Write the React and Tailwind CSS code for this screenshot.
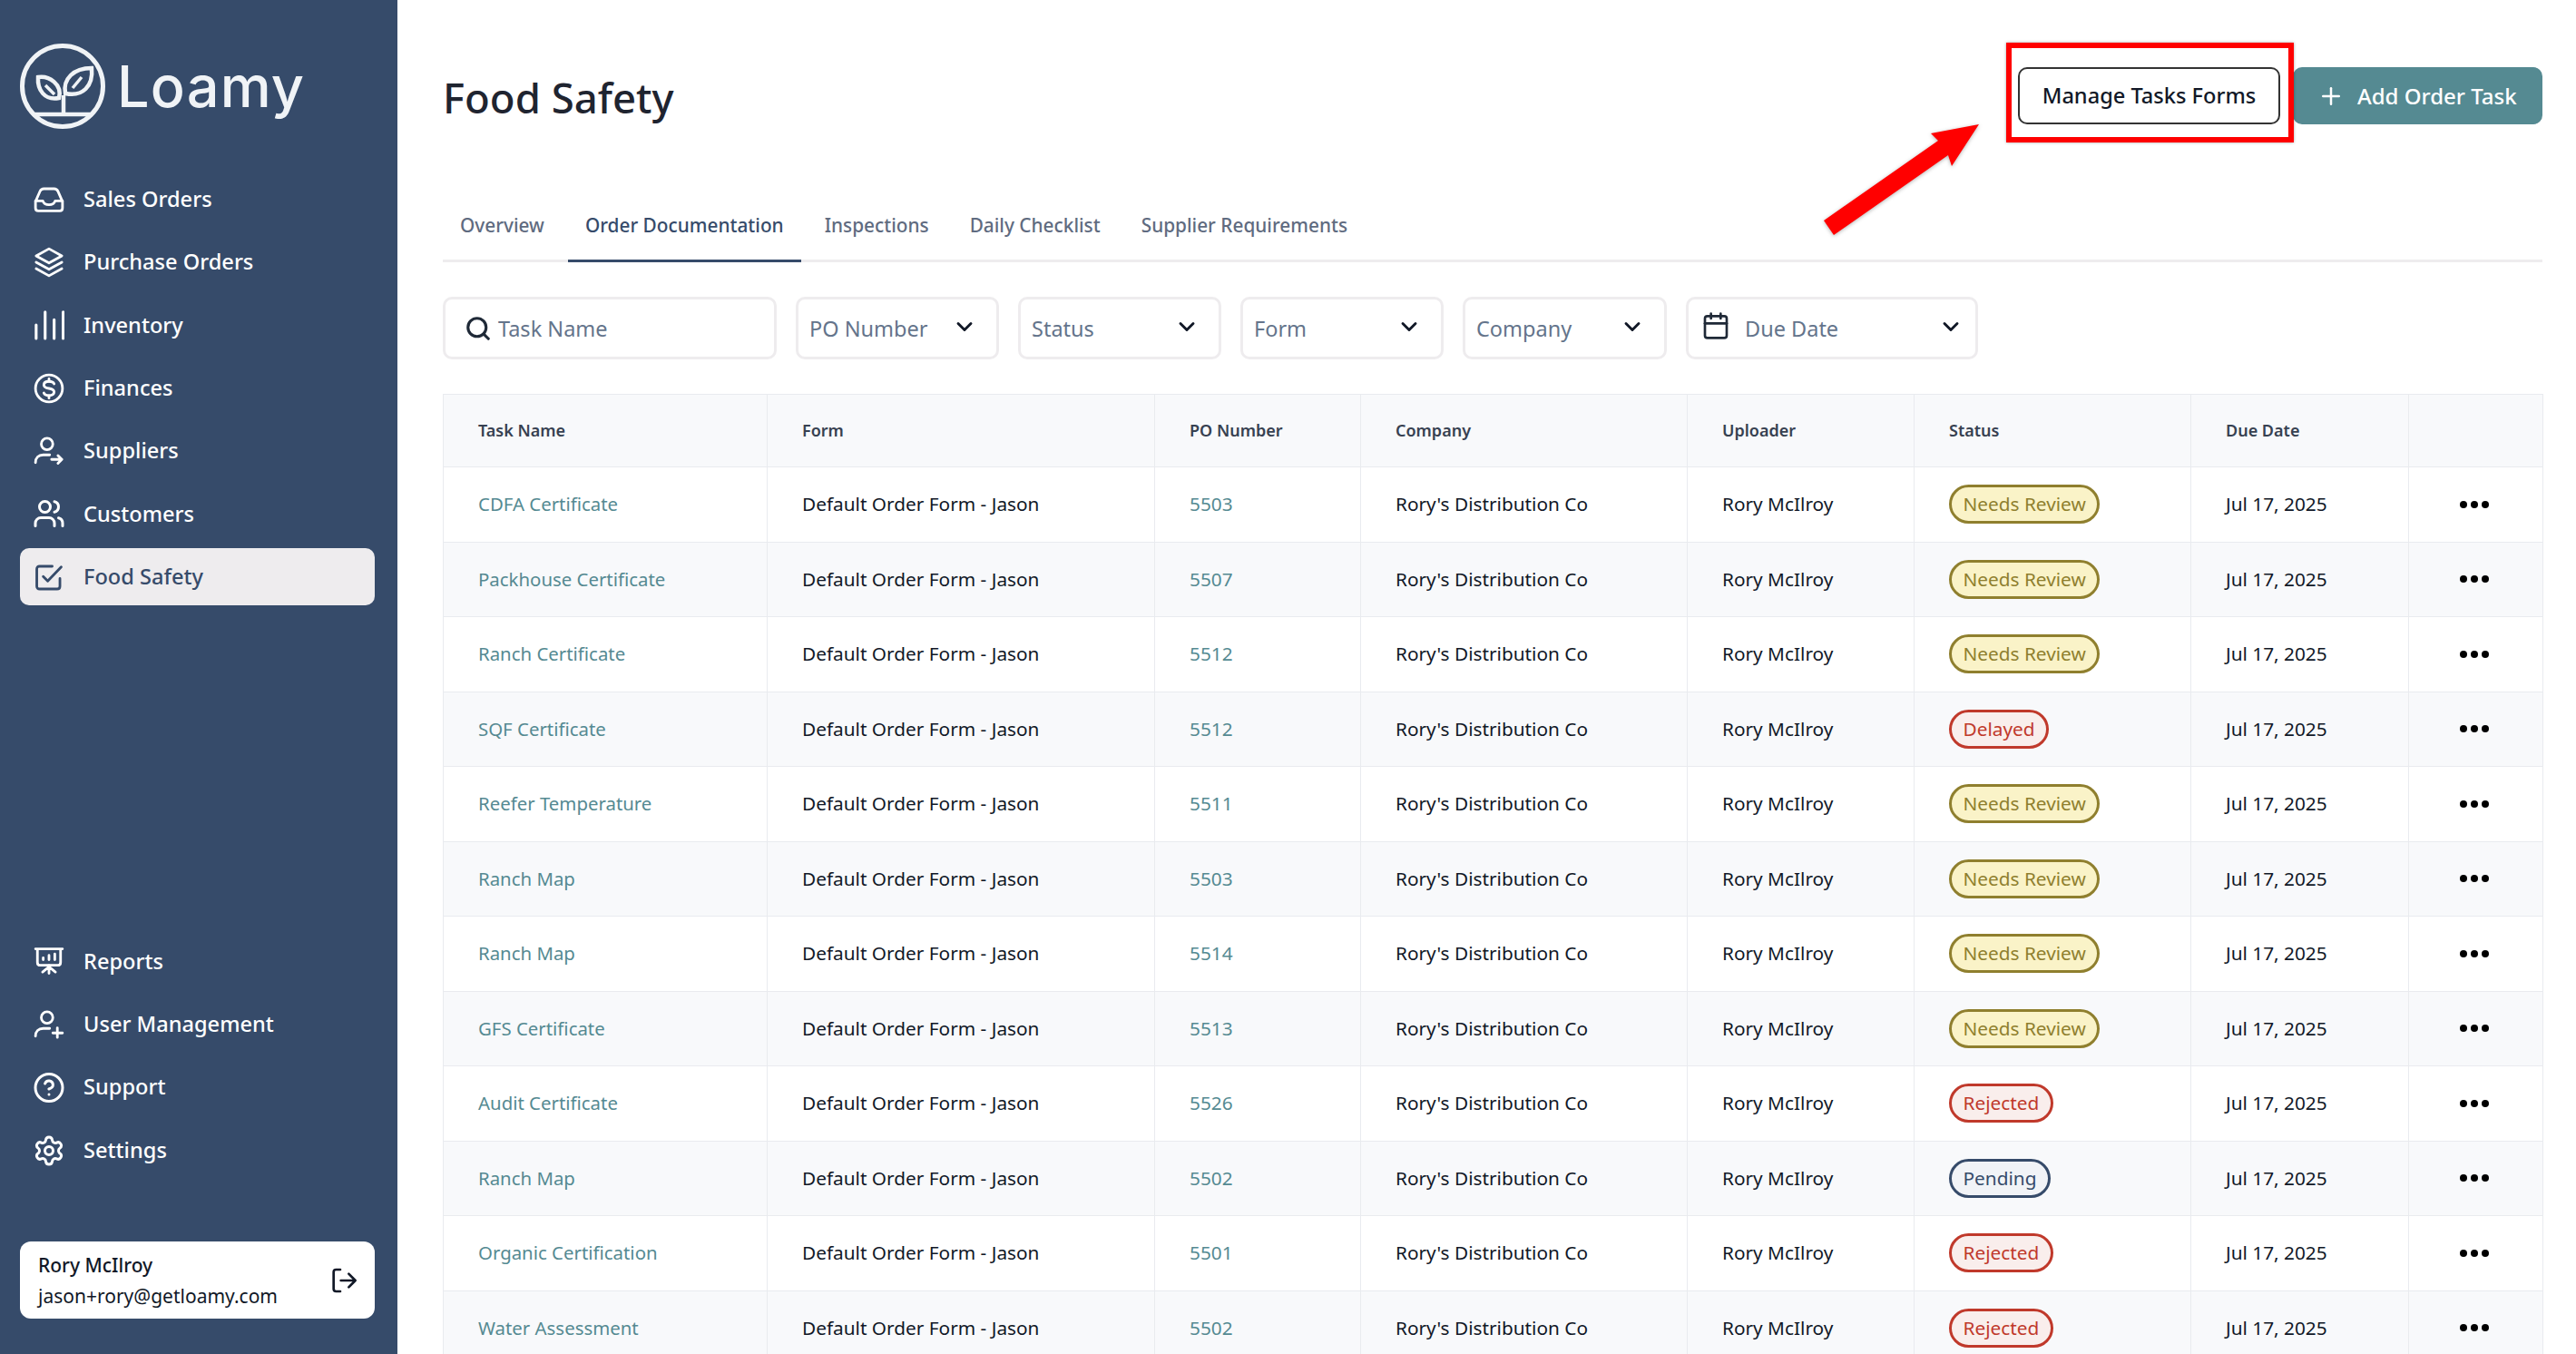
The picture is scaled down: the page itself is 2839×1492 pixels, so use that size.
import {
  ChevronDown,
  CircleHelp,
  Plus,
  Search,
  Settings,
  Users,
  Calendar,
} from "lucide-react";

const Stroke = ({ children, className = "w-[34px] h-[34px]", width = 2 }) => (
  <svg
    viewBox="0 0 24 24"
    fill="none"
    stroke="currentColor"
    strokeWidth={width}
    strokeLinecap="round"
    strokeLinejoin="round"
    className={className}
  >
    {children}
  </svg>
);

const Tray = () => (
  <Stroke>
    <path d="M1.500 13.500 5 5.500C5.600 4.200 6.400 3.500 8 3.500h8c1.600 0 2.400.7 3 2l3.500 8v5c0 1.400-.8 2.200-2.200 2.200H3.700c-1.400 0-2.200-.8-2.200-2.200z" />
    <path d="M1.500 13h5.700c.6 1.800 2.500 3 4.800 3s4.200-1.200 4.800-3h5.700" />
  </Stroke>
);

const Stack = () => (
  <Stroke>
    <path d="M12 1.500l10 5.500-10 5.500L2 7z" />
    <path d="M2 12l10 5.500L22 12" />
    <path d="M2 17l10 5.500L22 17" />
  </Stroke>
);

const Bars = () => (
  <Stroke width={2.200}>
    <path d="M2 12v10.500M9 2v20.500M16 8v14.500M23 2v20.500" />
  </Stroke>
);

const Dollar = () => (
  <Stroke>
    <circle cx="12" cy="12" r="10.500" />
    <path d="M16 8.500c-.6-1.500-2-2-4-2-2.500 0-4 1-4 2.800 0 3.900 8 1.500 8 5.400 0 1.800-1.500 2.800-4 2.800-2 0-3.400-.5-4-2" />
    <path d="M12 4.500v2M12 17.500v2" />
  </Stroke>
);

const UserArrow = () => (
  <Stroke>
    <circle cx="10.500" cy="6.500" r="4.500" />
    <path d="M1.500 21c0-3.800 2.400-6 6-6h5" />
    <path d="M14 18.500h8M19 15.500l3 3-3 3" />
  </Stroke>
);

const UserPlus = () => (
  <Stroke>
    <circle cx="10.500" cy="6.500" r="4.500" />
    <path d="M1.500 21c0-3.800 2.400-6 6-6h5" />
    <path d="M18.500 14.500v7.500M15 18.500h7.500" />
  </Stroke>
);

const CheckBox = () => (
  <Stroke>
    <path d="M20.500 13v6c0 1.400-.8 2.200-2.200 2.200H4.700c-1.400 0-2.200-.8-2.200-2.200V5.700c0-1.400.8-2.200 2.200-2.200h9.800" />
    <path d="M7.500 11.500l3.500 3.500L21.500 4" />
  </Stroke>
);

const Board = () => (
  <Stroke>
    <path d="M1.500 2.500h21M3 2.500v10.500c0 1.500.8 2.300 2.300 2.300h13.400c1.500 0 2.300-.8 2.300-2.300V2.500" />
    <path d="M12 15.500v6M12 16.500l-5 4M12 16.500l5 4M7.500 11v-1.500M12 11V7.500M16.500 11V6.500" />
  </Stroke>
);

const LogoutIcon = () => (
  <Stroke className="w-[32px] h-[32px]" width={2}>
    <path d="M9 3H5.500C4.300 3 3.500 3.800 3.500 5v14c0 1.200.8 2 2 2H9" />
    <path d="M9.500 12h12M16 6.500l5.500 5.500-5.500 5.500" />
  </Stroke>
);

const LoamyMark = () => (
  <svg viewBox="0 0 100 100" fill="none" stroke="#f0f3f6" strokeWidth="4.500" className="w-[100px] h-[100px] shrink-0">
    <circle cx="50" cy="50" r="44.500" strokeWidth="5" />
    <path d="M17 81h66" />
    <path d="M51 81V60" />
    <path d="M53 58C50 42 62 30 82 30c2 20-10 32-29 28z" />
    <path d="M61 52l10-12" strokeWidth="3.500" />
    <path d="M46 63C30 66 22 54 23 40c12-2 27 8 23 23z" />
    <path d="M31 49l10 10" strokeWidth="3.500" />
  </svg>
);

const topNav = [
  ["Sales Orders", <Tray />],
  ["Purchase Orders", <Stack />],
  ["Inventory", <Bars />],
  ["Finances", <Dollar />],
  ["Suppliers", <UserArrow />],
  ["Customers", <Users className="w-[38px] h-[38px]" strokeWidth={2} />],
  ["Food Safety", <CheckBox />, true],
];

const bottomNav = [
  ["Reports", <Board />],
  ["User Management", <UserPlus />],
  ["Support", <CircleHelp className="w-[37px] h-[37px]" strokeWidth={2} />],
  ["Settings", <Settings className="w-[38px] h-[38px]" strokeWidth={2} />],
];

function NavItem({ label, icon, active }) {
  return (
    <div
      className={`flex items-center h-[63px] pl-[14px] rounded-[10px] text-[23.600px] font-medium ${
        active ? "bg-[#eeecee] text-[#364b6a]" : "text-white"
      }`}
    >
      <span className="w-[36px] flex justify-center shrink-0">{icon}</span>
      <span className="ml-[20px]">{label}</span>
    </div>
  );
}

function Sidebar() {
  return (
    <aside className="w-[438px] shrink-0 h-full bg-[#364b6a] flex flex-col">
      <div className="flex items-center h-[100px] mt-[45px] ml-[19px]">
        <LoamyMark />
        <span className="ml-[10px] font-['Inter',sans-serif] text-[63px] font-medium leading-none text-[#f0f3f6] tracking-[1.200px]">
          Loamy
        </span>
      </div>
      <nav className="flex flex-col gap-[6.400px] ml-[22px] mr-[25px] mt-[43px]">
        {topNav.map(([label, icon, active]) => (
          <NavItem key={label} label={label} icon={icon} active={active} />
        ))}
      </nav>
      <nav className="flex flex-col gap-[6.400px] ml-[22px] mr-[25px] mt-auto">
        {bottomNav.map(([label, icon]) => (
          <NavItem key={label} label={label} icon={icon} />
        ))}
      </nav>
      <div className="flex items-center justify-between h-[85px] ml-[22px] mr-[25px] mt-[69px] mb-[39px] pl-[20px] pr-[18px] rounded-[12px] bg-white text-[#111827]">
        <div className="text-[21px] leading-[34px]">
          <div className="font-medium">Rory McIlroy</div>
          <div>jason+rory@getloamy.com</div>
        </div>
        <LogoutIcon />
      </div>
    </aside>
  );
}

const tabs = ["Overview", "Order Documentation", "Inspections", "Daily Checklist", "Supplier Requirements"];

function Tabs() {
  return (
    <div className="flex gap-[7px] h-[72px] mt-[80px] border-b-[3px] border-[#eeecee]">
      {tabs.map((t) => (
        <div
          key={t}
          className={`px-[19px] pt-[16px] h-[72px] text-[20.800px] font-medium ${
            t === "Order Documentation" ? "border-b-[3px] border-[#364b6a] text-[#364b6a]" : "text-[#5f6b80]"
          }`}
        >
          {t}
        </div>
      ))}
    </div>
  );
}

function Filter({ label, width }) {
  return (
    <div className={`flex items-center justify-between pl-[12px] pr-[21px] h-[69px] rounded-[10px] border-[3px] border-[#eeecee] text-[23.500px] text-[#64748b] ${width}`}>
      <span className="mt-[2px]">{label}</span>
      <ChevronDown className="w-[28px] h-[28px] text-[#111827] -mt-[4px]" strokeWidth={2.500} />
    </div>
  );
}

function Filters() {
  return (
    <div className="flex gap-[21px] mt-[38px]">
      <div className="flex items-center w-[368px] h-[69px] pl-[21px] rounded-[10px] border-[3px] border-[#eeecee] text-[23.500px] text-[#64748b]">
        <Search className="w-[30px] h-[30px] text-[#1f2937]" strokeWidth={2.500} />
        <span className="ml-[7px] mt-[2px]">Task Name</span>
      </div>
      <Filter label="PO Number" width="w-[224px]" />
      <Filter label="Status" width="w-[224px]" />
      <Filter label="Form" width="w-[224px]" />
      <Filter label="Company" width="w-[225px]" />
      <div className="flex items-center justify-between w-[322px] h-[69px] pl-[14px] pr-[13px] rounded-[10px] border-[3px] border-[#eeecee] text-[23.500px] text-[#64748b]">
        <span className="flex items-center">
          <Calendar className="w-[32px] h-[32px] text-[#1f2937] -mt-[6px]" strokeWidth={2} />
          <span className="ml-[16px] mt-[2px]">Due Date</span>
        </span>
        <ChevronDown className="w-[28px] h-[28px] text-[#111827] -mt-[4px]" strokeWidth={2.500} />
      </div>
    </div>
  );
}

const NEEDS = "Needs Review";
const rows = [
  ["CDFA Certificate", "5503", NEEDS],
  ["Packhouse Certificate", "5507", NEEDS],
  ["Ranch Certificate", "5512", NEEDS],
  ["SQF Certificate", "5512", "Delayed"],
  ["Reefer Temperature", "5511", NEEDS],
  ["Ranch Map", "5503", NEEDS],
  ["Ranch Map", "5514", NEEDS],
  ["GFS Certificate", "5513", NEEDS],
  ["Audit Certificate", "5526", "Rejected"],
  ["Ranch Map", "5502", "Pending"],
  ["Organic Certification", "5501", "Rejected"],
  ["Water Assessment", "5502", "Rejected"],
];

const pillStyles = {
  [NEEDS]: "border-[#8f7f2e] bg-[#faf3c8] text-[#8f7f2e]",
  Delayed: "border-[#c0392b] bg-[#f9eeec] text-[#c0392b]",
  Rejected: "border-[#c0392b] bg-[#f9eeec] text-[#c0392b]",
  Pending: "border-[#364b6a] bg-[#f1f3f7] text-[#364b6a]",
};

function Pill({ status }) {
  return (
    <span className={`inline-flex items-center h-[43px] px-[12.500px] rounded-full border-[3px] text-[20.800px] ${pillStyles[status]}`}>
      {status}
    </span>
  );
}

const headers = ["Task Name", "Form", "PO Number", "Company", "Uploader", "Status", "Due Date", ""];
const widths = ["w-[357px]", "w-[427px]", "w-[227px]", "w-[360px]", "w-[250px]", "w-[305px]", "w-[240px]", "w-[148px]"];
const cell = "pl-[38px] border border-[#e9ebef]";

function TasksTable() {
  return (
    <table className="mt-[38px] w-[2314px] table-fixed border-collapse">
      <colgroup>
        {widths.map((w, i) => (
          <col key={i} className={w} />
        ))}
      </colgroup>
      <thead>
        <tr className="h-[80px] bg-[#f8f9fb]">
          {headers.map((h, i) => (
            <th key={i} className={`${cell} text-left text-[18px] font-semibold text-[#374151]`}>
              {h}
            </th>
          ))}
        </tr>
      </thead>
      <tbody className="text-[20.800px] text-[#111827]">
        {rows.map(([task, po, status], i) => (
          <tr key={i} className={`h-[82.500px] ${i % 2 ? "bg-[#f8f9fb]" : "bg-white"}`}>
            <td className={`${cell} text-[20.400px] text-[#558a92]`}>{task}</td>
            <td className={cell}>Default Order Form - Jason</td>
            <td className={`${cell} text-[#558a92]`}>{po}</td>
            <td className={cell}>Rory's Distribution Co</td>
            <td className={cell}>Rory McIlroy</td>
            <td className={cell}>
              <Pill status={status} />
            </td>
            <td className={cell}>Jul 17, 2025</td>
            <td className="border border-[#e9ebef]">
              <div className="flex justify-center gap-[4px] pr-[4px]">
                <span className="w-[8px] h-[8px] rounded-full bg-black" />
                <span className="w-[8px] h-[8px] rounded-full bg-black" />
                <span className="w-[8px] h-[8px] rounded-full bg-black" />
              </div>
            </td>
          </tr>
        ))}
      </tbody>
    </table>
  );
}

export default function App() {
  return (
    <div className="flex w-screen h-screen overflow-hidden bg-white font-['Noto_Sans',sans-serif]">
      <Sidebar />
      <main className="flex-1 pl-[50px] pr-[37px] min-w-0">
        {/* Header */}
        <div className="flex items-center justify-between mt-[74px] h-[63px]">
          <h1 className="text-[45.500px] font-medium text-[#1f2430] mt-[4px]">Food Safety</h1>
          <div className="flex gap-[14px]">
            <div className="relative">
              <button className="w-[289px] h-[63px] rounded-[10px] border-2 border-[#333] bg-white text-[23.600px] font-medium text-[#111827]">
                Manage Tasks Forms
              </button>
              {/* screenshot annotation */}
              <div className="absolute -left-[13px] -right-[15px] -top-[27px] -bottom-[20px] border-[6px] border-[#ff0000] shadow-[0_0_3px_rgba(0,0,0,0.35)]" />
              <svg viewBox="0 0 171 122" className="absolute -left-[214px] top-[63px] w-[171px] h-[122px] drop-shadow-[0_1px_2px_rgba(0,0,0,0.3)]">
                <polygon points="171,0 118,10 126,18 0,106 11,122 137,34 141,46" fill="#ff0000" />
              </svg>
            </div>
            <button className="flex items-center w-[275px] h-[63px] pl-[27px] rounded-[10px] bg-[#558a92] text-[24px] font-medium text-white">
              <Plus className="w-[30px] h-[30px]" strokeWidth={2} />
              <span className="ml-[14px]">Add Order Task</span>
            </button>
          </div>
        </div>
        <Tabs />
        <Filters />
        <TasksTable />
      </main>
    </div>
  );
}
